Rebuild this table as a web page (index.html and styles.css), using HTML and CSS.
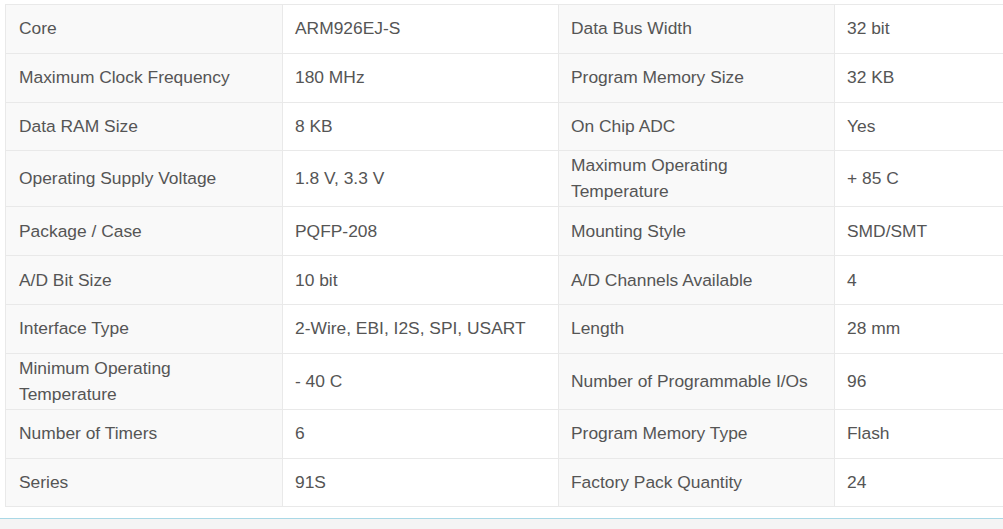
FILE: index.html
```html
<!DOCTYPE html>
<html>
<head>
<meta charset="utf-8">
<link rel="stylesheet" href="styles.css">
</head>
<body>
<div class="page">
  <table class="specs">
    <colgroup><col class="c1"><col class="c2"><col class="c3"><col class="c4"></colgroup>
    <tr><td class="k">Core</td><td class="v">ARM926EJ-S</td><td class="k">Data Bus Width</td><td class="v">32 bit</td></tr>
    <tr><td class="k">Maximum Clock Frequency</td><td class="v">180 MHz</td><td class="k">Program Memory Size</td><td class="v">32 KB</td></tr>
    <tr><td class="k">Data RAM Size</td><td class="v">8 KB</td><td class="k">On Chip ADC</td><td class="v">Yes</td></tr>
    <tr><td class="k">Operating Supply Voltage</td><td class="v">1.8 V, 3.3 V</td><td class="k">Maximum Operating Temperature</td><td class="v">+ 85 C</td></tr>
    <tr><td class="k">Package / Case</td><td class="v">PQFP-208</td><td class="k">Mounting Style</td><td class="v">SMD/SMT</td></tr>
    <tr><td class="k">A/D Bit Size</td><td class="v">10 bit</td><td class="k">A/D Channels Available</td><td class="v">4</td></tr>
    <tr><td class="k">Interface Type</td><td class="v">2-Wire, EBI, I2S, SPI, USART</td><td class="k">Length</td><td class="v">28 mm</td></tr>
    <tr><td class="k">Minimum Operating Temperature</td><td class="v">- 40 C</td><td class="k">Number of Programmable I/Os</td><td class="v">96</td></tr>
    <tr><td class="k">Number of Timers</td><td class="v">6</td><td class="k">Program Memory Type</td><td class="v">Flash</td></tr>
    <tr><td class="k">Series</td><td class="v">91S</td><td class="k">Factory Pack Quantity</td><td class="v">24</td></tr>
  </table>
  <div class="footer-band"></div>
</div>
</body>
</html>
```

FILE: styles.css
```css
html, body {
  margin: 0;
  padding: 0;
  background: #fff;
  overflow: hidden;
}
.page {
  padding: 4px 0 0 5px;
  width: 1110px;
  font-family: "Liberation Sans", Arial, sans-serif;
  font-size: 17.4px;
  color: #555;
}
.specs {
  border-collapse: collapse;
  table-layout: fixed;
  width: 1106px;
}
.specs col.c1 { width: 277px; }
.specs col.c2,
.specs col.c3,
.specs col.c4 { width: 276px; }
.specs td {
  border: 1px solid #e9e9e9;
  height: 48.8px;
  padding: 1px 13px 2px;
  line-height: 26px;
  vertical-align: middle;
  box-sizing: border-box;
}
.specs td + td {
  padding-left: 12px;
}
.specs td.k {
  background: #f9f9f9;
}
.specs td.v {
  background: #fff;
}
.footer-band {
  margin: 11px 0 0 -5px;
  border-top: 1px solid #a9d8e6;
  background: #f4f4f4;
  height: 40px;
}
```
